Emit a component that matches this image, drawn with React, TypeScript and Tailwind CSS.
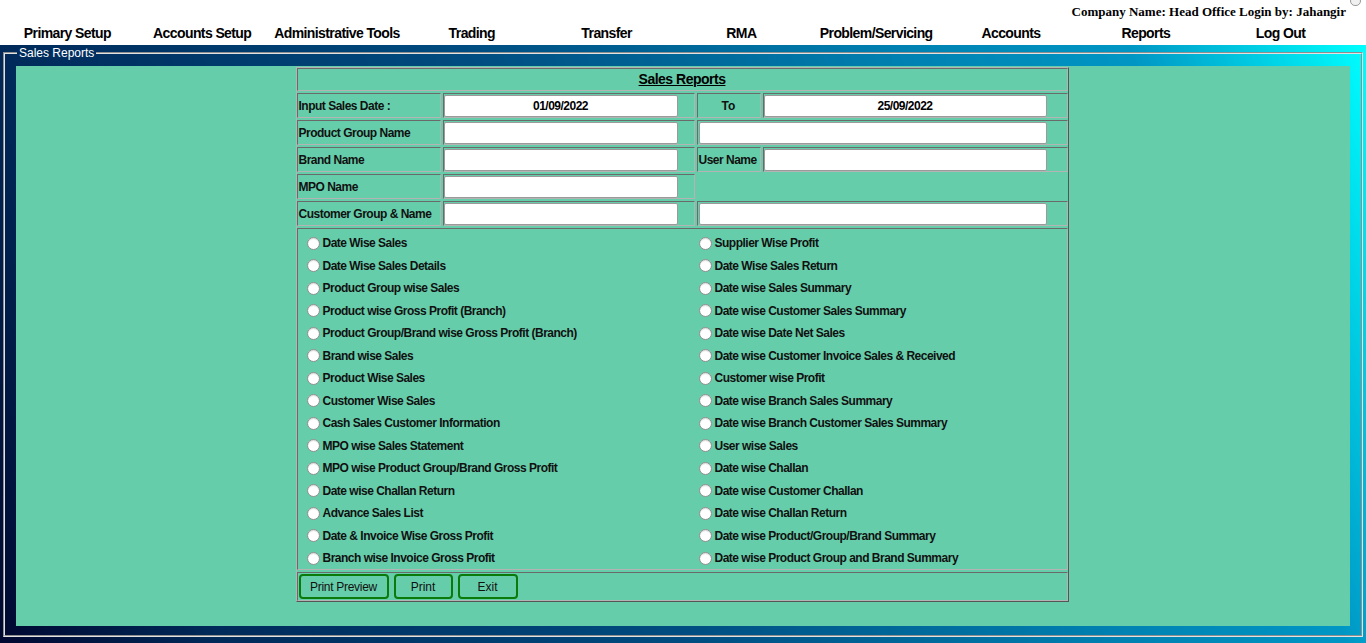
import React from "react";

const navItems = [
  "Primary Setup",
  "Accounts Setup",
  "Administrative Tools",
  "Trading",
  "Transfer",
  "RMA",
  "Problem/Servicing",
  "Accounts",
  "Reports",
  "Log Out",
];

const leftReports = [
  "Date Wise Sales",
  "Date Wise Sales Details",
  "Product Group wise Sales",
  "Product wise Gross Profit (Branch)",
  "Product Group/Brand wise Gross Profit (Branch)",
  "Brand wise Sales",
  "Product Wise Sales",
  "Customer Wise Sales",
  "Cash Sales Customer Information",
  "MPO wise Sales Statement",
  "MPO wise Product Group/Brand Gross Profit",
  "Date wise Challan Return",
  "Advance Sales List",
  "Date & Invoice Wise Gross Profit",
  "Branch wise Invoice Gross Profit",
];

const rightReports = [
  "Supplier Wise Profit",
  "Date Wise Sales Return",
  "Date wise Sales Summary",
  "Date wise Customer Sales Summary",
  "Date wise Date Net Sales",
  "Date wise Customer Invoice Sales & Received",
  "Customer wise Profit",
  "Date wise Branch Sales Summary",
  "Date wise Branch Customer Sales Summary",
  "User wise Sales",
  "Date wise Challan",
  "Date wise Customer Challan",
  "Date wise Challan Return",
  "Date wise Product/Group/Brand Summary",
  "Date wise Product Group and Brand Summary",
];

// inset cell border like an old html table
const cell =
  "border border-t-[#6a6a6a] border-l-[#6a6a6a] border-r-[#b4b4b4] border-b-[#b4b4b4]";

function TextBox({ value, width }: { value?: string; width: string }) {
  return (
    <div
      className={`${width} h-[22px] bg-white border border-[#9a9a9a] rounded-[2px] flex items-center justify-center text-[12px] font-bold tracking-[-0.5px] text-black`}
    >
      {value}
    </div>
  );
}

function Radio({ label }: { label: string }) {
  return (
    <div className="h-[22.5px] flex items-center gap-[3px]">
      <span className="w-[13px] h-[13px] rounded-full bg-white border border-[#8f8f8f] shadow-[inset_0_1px_1px_rgba(0,0,0,0.15)]" />
      <span className="text-[12px] font-bold tracking-[-0.5px] whitespace-nowrap text-[#111]">{label}</span>
    </div>
  );
}

function Label({ text }: { text: string }) {
  return (
    <div
      className={`${cell} h-[25px] flex items-center pl-[1px] text-[12px] font-bold tracking-[-0.5px] whitespace-nowrap text-[#111]`}
    >
      {text}
    </div>
  );
}

export default function App() {
  return (
    <div
      className="w-[1366px] h-[643px] overflow-hidden flex flex-col bg-white"
      style={{ fontFamily: '"Liberation Sans", Arial, sans-serif' }}
    >
      {/* header */}
      <div className="relative h-[45px] flex flex-col bg-white">
        <div
          className="h-[20px] mt-[2px] pr-[20px] flex items-center justify-end text-[13px] font-bold text-black whitespace-nowrap"
          style={{ fontFamily: '"Liberation Serif", "Times New Roman", serif' }}
        >
          Company Name: Head Office Login by: Jahangir
        </div>
        <span className="absolute right-[5px] top-[-4px] w-[11px] h-[10px] rounded-full border border-[#9a9a9a] bg-[#f0f0f0]" />
        <div className="w-[1348px] h-[20px] mt-[1px] grid grid-cols-10">
          {navItems.map((n) => (
            <div
              key={n}
              className="flex items-center justify-center text-[14px] font-bold tracking-[-0.6px] whitespace-nowrap text-black"
            >
              {n}
            </div>
          ))}
        </div>
      </div>

      {/* body */}
      <div className="flex-1 bg-[linear-gradient(70deg,#000830_0%,#002a5a_14%,#004c80_43%,#0080b0_70%,#0096c4_85%,#00ffff_100%)] pt-[1px]">
        <fieldset className="mx-[3px] h-[591px] border-2 [border-style:groove] border-[#e2e2e2] pl-[11px] pr-[11px] pt-[6px] pb-[9px] flex flex-col">
          <legend className="ml-[1px] px-[2px] text-[12px] leading-[14px] text-white">Sales Reports</legend>
          <div className="flex-1 bg-[#66cdaa] pt-[1px] flex flex-col items-center">
            <div className="ml-[-2px] w-[773px] border border-t-[#b4b4b4] border-l-[#b4b4b4] border-r-[#555] border-b-[#555] grid grid-cols-[144px_252px_64px_305px] gap-[2px]">
              <div
                className={`${cell} col-span-4 h-[23px] flex items-center justify-center text-[14px] font-bold tracking-[-0.5px] underline text-black`}
              >
                Sales Reports
              </div>

              <Label text="Input Sales Date :" />
              <div className={`${cell} flex items-center`}>
                <TextBox value="01/09/2022" width="w-[234px]" />
              </div>
              <div className={`${cell} flex items-center justify-center text-[12px] font-bold text-[#111]`}>To</div>
              <div className={`${cell} flex items-center`}>
                <TextBox value="25/09/2022" width="w-[283px]" />
              </div>

              <Label text="Product Group Name" />
              <div className={`${cell} flex items-center`}>
                <TextBox width="w-[234px]" />
              </div>
              <div className={`${cell} col-span-2 flex items-center pl-[1px]`}>
                <TextBox width="w-[348px]" />
              </div>

              <Label text="Brand Name" />
              <div className={`${cell} flex items-center`}>
                <TextBox width="w-[234px]" />
              </div>
              <Label text="User Name" />
              <div className={`${cell} flex items-center`}>
                <TextBox width="w-[283px]" />
              </div>

              <Label text="MPO Name" />
              <div className={`${cell} flex items-center`}>
                <TextBox width="w-[234px]" />
              </div>
              <div className="col-span-2" />

              <Label text="Customer Group & Name" />
              <div className={`${cell} flex items-center`}>
                <TextBox width="w-[234px]" />
              </div>
              <div className={`${cell} col-span-2 flex items-center pl-[1px]`}>
                <TextBox width="w-[348px]" />
              </div>

              {/* report options */}
              <div className={`${cell} col-span-4 h-[342px] pt-[3px] pl-[9px] grid grid-cols-[392px_1fr]`}>
                <div className="flex flex-col">
                  {leftReports.map((r) => (
                    <Radio key={r} label={r} />
                  ))}
                </div>
                <div className="flex flex-col">
                  {rightReports.map((r) => (
                    <Radio key={r} label={r} />
                  ))}
                </div>
              </div>

              <div className={`${cell} col-span-4 h-[29px] flex items-center gap-[5px] pl-[1px]`}>
                <button className="w-[90px] h-[25px] border-2 border-[#0a7a0a] rounded-[4px] text-[12px] tracking-[-0.3px] text-[#111]">
                  Print Preview
                </button>
                <button className="w-[59px] h-[25px] border-2 border-[#0a7a0a] rounded-[4px] text-[12px] text-[#111]">
                  Print
                </button>
                <button className="w-[60px] h-[25px] border-2 border-[#0a7a0a] rounded-[4px] text-[12px] text-[#111]">
                  Exit
                </button>
              </div>
            </div>
          </div>
        </fieldset>
      </div>
    </div>
  );
}
